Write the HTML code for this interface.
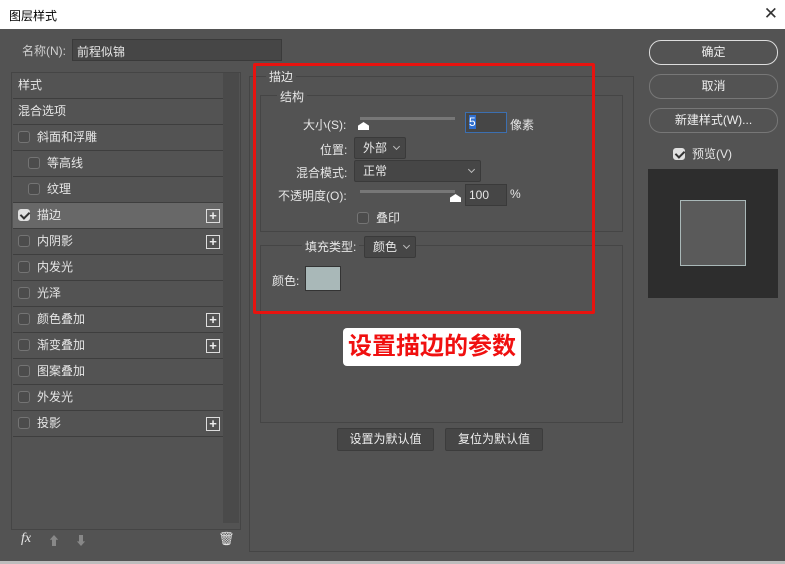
<!DOCTYPE html>
<html><head><meta charset="utf-8"><style>
*{margin:0;padding:0;box-sizing:border-box}
body{width:785px;height:564px;background:#535353;font-family:"Liberation Sans","Noto Sans CJK SC",sans-serif;font-size:12px;color:#e6e6e6;position:relative;overflow:hidden}
.a{position:absolute}
.title{left:0;top:0;width:785px;height:29px;background:#fff;color:#000;font-size:12px;padding:7px 0 0 9px}
.close{right:7px;top:4px;font-size:17px;color:#333;font-family:"DejaVu Sans",sans-serif;font-weight:100}
.inp{background:#464646;border:1px solid #3a3a3a}
.row{left:13px;width:210px;height:26px;border-bottom:1px solid #3e3e3e;line-height:25px;padding-left:5px}
.cb{display:inline-block;width:12px;height:12px;border:1px solid #747474;border-radius:3px;vertical-align:-2px;margin-right:7px;background:#4c4c4c}
.cbk{background:#e0e0e0;border-color:#e0e0e0;position:relative}
.cbk:after{content:"";position:absolute;left:3px;top:0px;width:4px;height:7px;border:solid #333;border-width:0 2px 2px 0;transform:rotate(45deg)}
.plus{position:absolute;right:3px;top:6px;width:14px;height:14px;border:1px solid #ddd;font-size:13px;line-height:11px;text-align:center;color:#eee;font-weight:bold}
.btn{border:1px solid #8a8a8a;border-radius:12px;text-align:center;line-height:22px;color:#eee}
.btn2{background:#464646;border:1px solid #3c3c3c;border-radius:2px;text-align:center;line-height:21px;color:#eee}
.grp{border:1px solid #6a6a6a}
.lbl{background:#535353;padding:0 3px}
.sel{background:#464646;border:1px solid #3a3a3a;border-radius:2px;padding-left:8px;line-height:20px}
.arr{position:absolute;right:6px;top:6px;width:5px;height:5px;border:solid #bbb;border-width:0 1px 1px 0;transform:rotate(45deg)}
.track{height:3px;background:#777}
.thumb{width:11px;height:8px;background:#fff;clip-path:polygon(50% 0,100% 45%,100% 100%,0 100%,0 45%)}
</style></head><body>
<div class="a title">图层样式</div>
<div class="a close">✕</div>
<div class="a" style="left:22px;top:42px;color:#cfcfcf">名称(N):</div>
<div class="a inp" style="left:72px;top:39px;width:210px;height:22px;padding:3px 4px">前程似锦</div>

<div class="a grp" style="left:11px;top:72px;width:230px;height:458px;border-color:#454545"></div>
<div class="a" style="left:223px;top:73px;width:16px;height:450px;background:#4a4a4a"></div>
<div class="a row" style="top:73px">样式</div>
<div class="a row" style="top:99px">混合选项</div>
<div class="a row" style="top:125px"><span class="cb"></span>斜面和浮雕</div>
<div class="a row" style="top:151px;padding-left:15px"><span class="cb"></span>等高线</div>
<div class="a row" style="top:177px;padding-left:15px"><span class="cb"></span>纹理</div>
<div class="a row" style="top:203px;background:#686868"><span class="cb cbk"></span>描边<span class="plus">+</span></div>
<div class="a row" style="top:229px"><span class="cb"></span>内阴影<span class="plus">+</span></div>
<div class="a row" style="top:255px"><span class="cb"></span>内发光</div>
<div class="a row" style="top:281px"><span class="cb"></span>光泽</div>
<div class="a row" style="top:307px"><span class="cb"></span>颜色叠加<span class="plus">+</span></div>
<div class="a row" style="top:333px"><span class="cb"></span>渐变叠加<span class="plus">+</span></div>
<div class="a row" style="top:359px"><span class="cb"></span>图案叠加</div>
<div class="a row" style="top:385px"><span class="cb"></span>外发光</div>
<div class="a row" style="top:411px"><span class="cb"></span>投影<span class="plus">+</span></div>
<div class="a" style="left:21px;top:531px;font-style:italic;font-family:'Liberation Serif',serif;font-size:14px">fx</div>
<div class="a" style="left:48px;top:532px;color:#888;font-size:12px">⬆</div>
<div class="a" style="left:75px;top:532px;color:#888;font-size:12px">⬇</div>
<div class="a" style="left:218px;top:531px;font-size:13px">🗑</div>

<div class="a grp" style="left:249px;top:76px;width:385px;height:476px;border-color:#454545"></div>
<div class="a lbl" style="left:266px;top:68px">描边</div>
<div class="a grp" style="left:260px;top:95px;width:363px;height:137px;border-color:#454545"></div>
<div class="a lbl" style="left:277px;top:88px">结构</div>
<div class="a" style="left:303px;top:116px">大小(S):</div>
<div class="a track" style="left:360px;top:117px;width:95px"></div>
<div class="a thumb" style="left:358px;top:122px"></div>
<div class="a inp" style="left:465px;top:112px;width:42px;height:21px;border-color:#3c6fb0;padding:2px 3px"><span style="background:#2f6fd0;color:#fff">5</span></div>
<div class="a" style="left:510px;top:116px">像素</div>
<div class="a" style="left:320px;top:141px">位置:</div>
<div class="a sel" style="left:354px;top:137px;width:52px;height:22px">外部<span class="arr"></span></div>
<div class="a" style="left:296px;top:164px">混合模式:</div>
<div class="a sel" style="left:354px;top:160px;width:127px;height:22px">正常<span class="arr"></span></div>
<div class="a" style="left:278px;top:187px">不透明度(O):</div>
<div class="a track" style="left:360px;top:190px;width:95px"></div>
<div class="a thumb" style="left:450px;top:194px"></div>
<div class="a inp" style="left:465px;top:184px;width:42px;height:22px;padding:3px 3px">100</div>
<div class="a" style="left:510px;top:187px">%</div>
<div class="a" style="left:357px;top:209px"><span class="cb"></span>叠印</div>
<div class="a grp" style="left:260px;top:245px;width:363px;height:178px;border-color:#454545"></div>
<div class="a lbl" style="left:302px;top:238px">填充类型:</div>
<div class="a sel" style="left:364px;top:236px;width:52px;height:22px">颜色<span class="arr"></span></div>
<div class="a" style="left:272px;top:272px">颜色:</div>
<div class="a" style="left:305px;top:266px;width:36px;height:25px;background:#a9b8b8;border:1px solid #333"></div>

<div class="a" style="left:253px;top:63px;width:342px;height:251px;border:3px solid #e8130f;border-radius:2px"></div>
<div class="a" style="left:343px;top:328px;width:178px;height:38px;background:#fff;border-radius:4px;color:#f01010;font-weight:bold;font-size:24px;line-height:38px;text-align:center">设置描边的参数</div>

<div class="a btn2" style="left:337px;top:428px;width:97px;height:23px">设置为默认值</div>
<div class="a btn2" style="left:445px;top:428px;width:98px;height:23px">复位为默认值</div>

<div class="a btn" style="left:649px;top:40px;width:129px;height:25px;border-color:#ddd">确定</div>
<div class="a btn" style="left:649px;top:74px;width:129px;height:25px;border-color:#777">取消</div>
<div class="a btn" style="left:649px;top:108px;width:129px;height:25px;border-color:#777">新建样式(W)...</div>
<div class="a" style="left:673px;top:145px"><span class="cb cbk"></span>预览(V)</div>
<div class="a" style="left:648px;top:169px;width:130px;height:129px;background:#2d2d2d"></div>
<div class="a" style="left:680px;top:200px;width:66px;height:66px;background:#5a5a5a;border:1px solid #a9b8b8"></div>
<div class="a" style="left:0;top:561px;width:785px;height:3px;background:#bdbdbd"></div>
</body></html>
